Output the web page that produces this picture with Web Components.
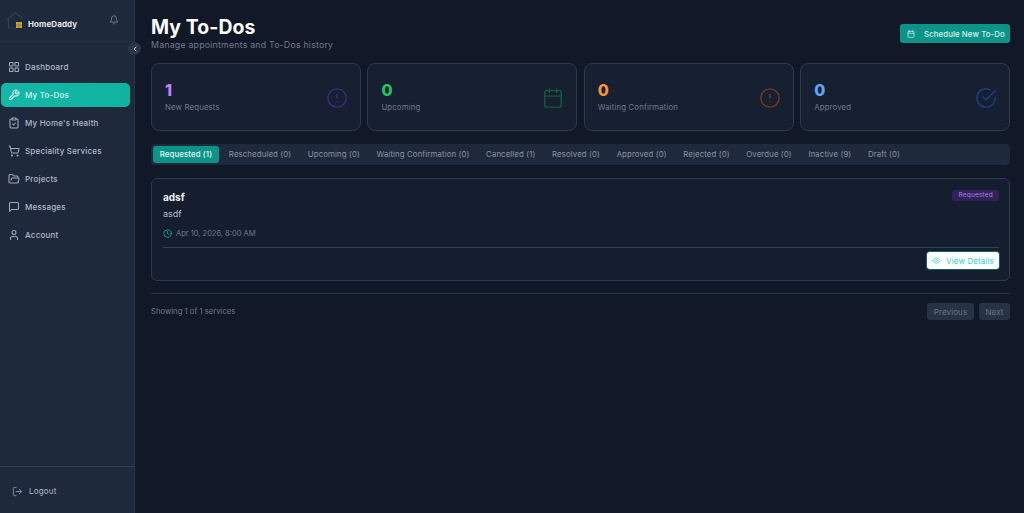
<!DOCTYPE html>
<html>
<head>
<meta charset="utf-8">
<title>My To-Dos</title>
<style>
  html, body { margin: 0; height: 100%; background: #111827; }
  body { font-family: "Inter", "Liberation Sans", sans-serif; overflow: hidden; }
</style>
</head>
<body>
<app-shell>
  <side-bar slot="side"></side-bar>
  <page-head title="My To-Dos" sub="Manage appointments and To-Dos history"></page-head>
  <div style="display:grid;grid-template-columns:repeat(4,1fr);gap:6.5px;margin-top:13px">
    <stat-card value="1" label="New Requests" color="#c084fc" tint="#6d3fd8" icon="alert"></stat-card>
    <stat-card value="0" label="Upcoming" color="#22c55e" tint="#16a34a" icon="calendar"></stat-card>
    <stat-card value="0" label="Waiting Confirmation" color="#fb923c" tint="#ea580c" icon="alert"></stat-card>
    <stat-card value="0" label="Approved" color="#60a5fa" tint="#2563eb" icon="check"></stat-card>
  </div>
  <tab-bar></tab-bar>
  <todo-card title="adsf" desc="asdf" when="Apr 10, 2026, 8:00 AM" status="Requested"></todo-card>
  <pager-row text="Showing 1 of 1 services"></pager-row>
</app-shell>

<script>
const ICONS = {
  grid: '<rect x="3" y="3" width="7" height="7" rx="1"/><rect x="14" y="3" width="7" height="7" rx="1"/><rect x="3" y="14" width="7" height="7" rx="1"/><rect x="14" y="14" width="7" height="7" rx="1"/>',
  wrench: '<path d="M14.7 6.3a1 1 0 0 0 0 1.4l1.6 1.6a1 1 0 0 0 1.4 0l3.77-3.77a6 6 0 0 1-7.94 7.94l-6.91 6.91a2.12 2.12 0 0 1-3-3l6.91-6.91a6 6 0 0 1 7.94-7.94l-3.76 3.76z"/>',
  clipboard: '<rect x="8" y="2" width="8" height="4" rx="1"/><path d="M16 4h2a2 2 0 0 1 2 2v14a2 2 0 0 1-2 2H6a2 2 0 0 1-2-2V6a2 2 0 0 1 2-2h2"/><path d="m9 14 2 2 4-4"/>',
  cart: '<circle cx="8" cy="21" r="1"/><circle cx="19" cy="21" r="1"/><path d="M2.05 2.05h2l2.66 12.42a2 2 0 0 0 2 1.58h9.78a2 2 0 0 0 1.95-1.57l1.65-7.43H5.12"/>',
  folder: '<path d="m6 14 1.5-2.9A2 2 0 0 1 9.24 10H20a2 2 0 0 1 1.94 2.5l-1.54 6a2 2 0 0 1-1.95 1.5H4a2 2 0 0 1-2-2V5a2 2 0 0 1 2-2h3.9a2 2 0 0 1 1.69.9l.81 1.2a2 2 0 0 0 1.67.9H18a2 2 0 0 1 2 2v2"/>',
  message: '<path d="M21 15a2 2 0 0 1-2 2H7l-4 4V5a2 2 0 0 1 2-2h14a2 2 0 0 1 2 2z"/>',
  user: '<path d="M19 21v-2a4 4 0 0 0-4-4H9a4 4 0 0 0-4 4v2"/><circle cx="12" cy="7" r="4"/>',
  logout: '<path d="M9 21H5a2 2 0 0 1-2-2V5a2 2 0 0 1 2-2h4"/><path d="m16 17 5-5-5-5"/><path d="M21 12H9"/>',
  bell: '<path d="M6 8a6 6 0 0 1 12 0c0 7 3 9 3 9H3s3-2 3-9"/><path d="M10.3 21a1.94 1.94 0 0 0 3.4 0"/>',
  calendar: '<rect x="3" y="4" width="18" height="18" rx="2"/><path d="M16 2v4M8 2v4M3 10h18"/>',
  clock: '<circle cx="12" cy="12" r="10"/><path d="M12 6v6l4 2"/>',
  eye: '<path d="M2 12s3-7 10-7 10 7 10 7-3 7-10 7-10-7-10-7Z"/><circle cx="12" cy="12" r="3"/>',
  alert: '<circle cx="12" cy="12" r="10"/><path d="M12 8v4M12 16h.01"/>',
  check: '<path d="M22 11.08V12a10 10 0 1 1-5.93-9.14"/><path d="M22 4 12 14.01l-3-3"/>',
  chevron: '<path d="m15 18-6-6 6-6"/>'
};
const icon = (name, size, sw = 2) =>
  `<svg width="${size}" height="${size}" viewBox="0 0 24 24" fill="none" stroke="currentColor" stroke-width="${sw}" stroke-linecap="round" stroke-linejoin="round">${ICONS[name]}</svg>`;

class AppShell extends HTMLElement {
  connectedCallback() {
    this.attachShadow({ mode: 'open' }).innerHTML = `
      <style>
        :host { display: flex; height: 100vh; background: #111827; }
        main { flex: 1; min-width: 0; padding: 16px 14px 0 16px; }
      </style>
      <slot name="side"></slot>
      <main><slot></slot></main>`;
  }
}

class SideBar extends HTMLElement {
  connectedCallback() {
    const items = [
      ['grid', 'Dashboard'], ['wrench', 'My To-Dos', 1], ['clipboard', "My Home's Health"],
      ['cart', 'Speciality Services'], ['folder', 'Projects'], ['message', 'Messages'], ['user', 'Account']
    ];
    this.attachShadow({ mode: 'open' }).innerHTML = `
      <style>
        :host { display: flex; flex-direction: column; width: 134px; height: 100%; flex: none; background: #1e293b; position: relative; border-right: 1px solid #273449; }
        .brand { display: flex; align-items: center; height: 42px; padding: 7px 16px 0 7px; border-bottom: 1px solid #263347; box-sizing: border-box; }
        .brand b { font-size: 8px; font-weight: 700; color: #e5e7eb; margin-left: 1px; letter-spacing: .1px; }
        .bell { margin-left: auto; color: #7a8594; display: flex; margin-top: -8px; margin-right: -1px; }
        nav { display: flex; flex-direction: column; gap: 4px; padding: 13px 4px 0 1px; flex: 1; }
        a { display: flex; align-items: center; height: 24px; padding-left: 7px; gap: 5px; border-radius: 5px; font-size: 8px; font-weight: 500; color: #b3bbc7; letter-spacing: .2px; }
        a svg { flex: none; color: #a3abb8; }
        a.on { background: linear-gradient(90deg, #14b8a6, #10b3a0); color: #d7f5ef; }
        a.on svg { color: #e3f8f4; }
        .foot { height: 47px; box-sizing: border-box; padding-top: 2px; border-top: 1px solid #334155; display: flex; align-items: center; gap: 6px; padding-left: 12px; font-size: 8px; color: #b3bbc7; letter-spacing: .2px; }
        .foot svg { color: #8a94a3; }
        .toggle { position: absolute; top: 42px; right: -7px; width: 13px; height: 13px; border-radius: 50%; background: #2b3648; color: #cbd5e1; display: flex; align-items: center; justify-content: center; }
      </style>
      <div class="brand">
        <svg width="20" height="24" viewBox="0 0 20 24" fill="none"><path d="M0 8 8 1l8 5" stroke="#36404e" stroke-width="1.2"/><path d="M1.5 7v9h7" stroke="#36404e" stroke-width="1.2"/><rect x="9" y="10" width="6" height="6" fill="#c9a437"/><path d="M12 10v6M9 13h6" stroke="#7d6a2a" stroke-width=".6"/></svg>
        <b>HomeDaddy</b>
        <span class="bell">${icon('bell', 10)}</span>
      </div>
      <nav>
        ${items.map(([i, t, on]) => `<a class="${on ? 'on' : ''}">${icon(i, 12, 2.1)}<span>${t}</span></a>`).join('')}
      </nav>
      <div class="foot">${icon('logout', 11)}<span>Logout</span></div>
      <div class="toggle">${icon('chevron', 8, 3)}</div>`;
  }
}

class PageHead extends HTMLElement {
  connectedCallback() {
    this.attachShadow({ mode: 'open' }).innerHTML = `
      <style>
        :host { display: flex; justify-content: space-between; align-items: flex-start; }
        h1 { margin: 0; font-size: 19.4px; line-height: 22px; font-weight: 700; color: #fff; letter-spacing: .1px; }
        p { margin: 1px 0 0; font-size: 8.8px; line-height: 11px; color: #6f7b8c; letter-spacing: .2px; }
        button { font: inherit; border: 0; margin-top: 8px; height: 19px; width: 110px; border-radius: 3px; background: #0d9488; color: #d8f3ee; font-size: 7.8px; font-weight: 500; display: flex; align-items: center; gap: 9px; padding: 0 0 0 7px; letter-spacing: .1px; }
      </style>
      <div><h1>${this.getAttribute('title')}</h1><p>${this.getAttribute('sub')}</p></div>
      <button>${icon('calendar', 8)}<span>Schedule New To-Do</span></button>`;
  }
}

class StatCard extends HTMLElement {
  connectedCallback() {
    const c = this.getAttribute('color');
    this.attachShadow({ mode: 'open' }).innerHTML = `
      <style>
        :host { display: flex; align-items: center; justify-content: space-between; height: 68px; box-sizing: border-box; padding: 0 13px; border: 1px solid #2c3a4d; border-radius: 8px; background: #162030; }
        b { display: block; font-size: 16px; line-height: 18px; font-weight: 800; color: ${c}; margin-bottom: 3px; margin-top: -1px; }
        span { font-size: 7.8px; line-height: 11px; color: #6f7b8c; display: block; letter-spacing: .15px; }
        svg { color: ${this.getAttribute('tint')}; opacity: .45; margin-right: -1px; margin-top: 1px; }
      </style>
      <div><b>${this.getAttribute('value')}</b><span>${this.getAttribute('label')}</span></div>
      ${icon(this.getAttribute('icon'), 22, 1.5)}`;
  }
}

class TabBar extends HTMLElement {
  connectedCallback() {
    const tabs = ['Requested (1)', 'Rescheduled (0)', 'Upcoming (0)', 'Waiting Confirmation (0)', 'Cancelled (1)',
      'Resolved (0)', 'Approved (0)', 'Rejected (0)', 'Overdue (0)', 'Inactive (9)', 'Draft (0)'];
    this.attachShadow({ mode: 'open' }).innerHTML = `
      <style>
        :host { display: flex; align-items: center; gap: 3px; height: 21px; margin-top: 13px; padding-left: 2px; background: #1e293b; border-radius: 4px; }
        span { flex: none; padding: 0 6.8px; font-size: 7.8px; line-height: 17px; height: 17px; color: #8b95a4; border-radius: 3px; white-space: nowrap; letter-spacing: .12px; }
        span.on { background: #0d9488; color: #e6f7f4; font-weight: 500; }
      </style>
      ${tabs.map((t, i) => `<span class="${i ? '' : 'on'}">${t}</span>`).join('')}`;
  }
}

class TodoCard extends HTMLElement {
  connectedCallback() {
    this.attachShadow({ mode: 'open' }).innerHTML = `
      <style>
        :host { display: block; height: 103px; box-sizing: border-box; margin-top: 13px; padding: 11px 10px 0 11px; border: 1px solid #2c3a4d; border-radius: 6px; background: #151e2e; }
        .top { display: flex; justify-content: space-between; align-items: flex-start; }
        h3 { margin: 0; font-size: 10px; line-height: 14px; font-weight: 700; color: #eef1f5; }
        .badge { font-size: 6.5px; line-height: 11px; padding: 0 6px; border-radius: 3px; background: #34215a; color: #a883e0; letter-spacing: .2px; }
        p { margin: 3px 0 0; font-size: 9px; line-height: 13px; color: #b7bfca; }
        .when { display: flex; align-items: center; gap: 4px; margin-top: 8px; font-size: 7.5px; line-height: 11px; color: #6f7b8c; }
        .when svg { color: #14b8a6; }
        .foot { display: flex; justify-content: flex-end; border-top: 1px solid #334155; margin-top: 8px; padding-top: 4px; }
        button { font: inherit; border: 0; width: 72px; height: 17px; border-radius: 3px; background: #fff; box-shadow: 0 0 0 1px rgba(20,184,166,.45); color: #2dd4bf; font-size: 8px; display: flex; align-items: center; justify-content: center; gap: 5px; padding: 0; letter-spacing: .12px; }
      </style>
      <div class="top"><h3>${this.getAttribute('title')}</h3><span class="badge">${this.getAttribute('status')}</span></div>
      <p>${this.getAttribute('desc')}</p>
      <div class="when">${icon('clock', 9)}<span>${this.getAttribute('when')}</span></div>
      <div class="foot"><button>${icon('eye', 9)}<span>View Details</span></button></div>`;
  }
}

class PagerRow extends HTMLElement {
  connectedCallback() {
    this.attachShadow({ mode: 'open' }).innerHTML = `
      <style>
        :host { display: flex; justify-content: space-between; align-items: center; margin-top: 12px; padding-top: 9px; border-top: 1px solid #263347; }
        span { font-size: 7.7px; color: #6f7b8c; }
        div { display: flex; gap: 5px; }
        button { font: inherit; border: 0; height: 17px; padding: 0; border-radius: 3px; background: #273244; color: #6b7686; font-size: 8px; letter-spacing: .12px; }
      </style>
      <span>${this.getAttribute('text')}</span>
      <div><button style="width:47px">Previous</button><button style="width:31px">Next</button></div>`;
  }
}

customElements.define('app-shell', AppShell);
customElements.define('side-bar', SideBar);
customElements.define('page-head', PageHead);
customElements.define('stat-card', StatCard);
customElements.define('tab-bar', TabBar);
customElements.define('todo-card', TodoCard);
customElements.define('pager-row', PagerRow);
</script>
</body>
</html>
